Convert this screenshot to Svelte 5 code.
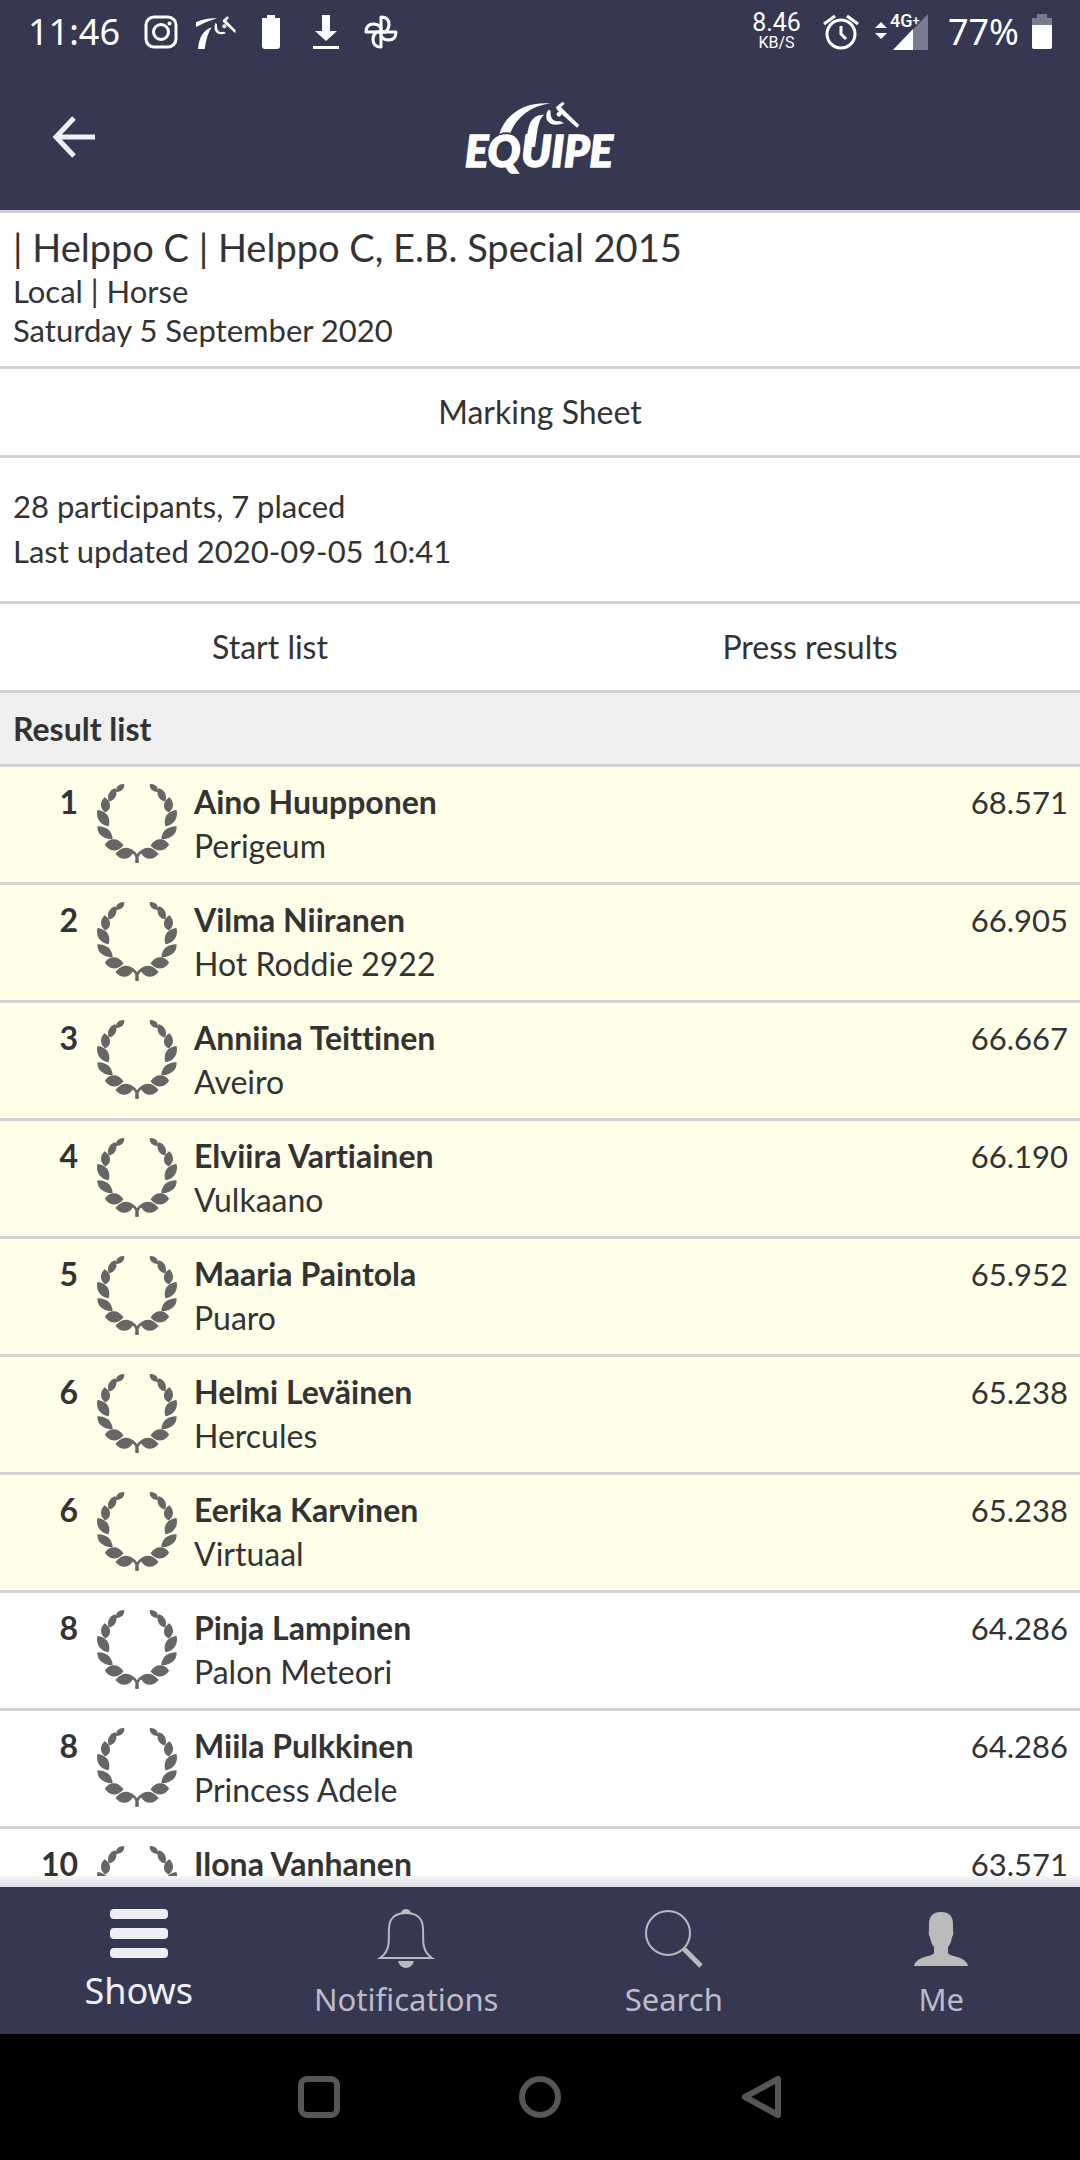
<script>
  const results = [
    { rank: 1, rider: 'Aino Huupponen', horse: 'Perigeum', score: '68.571', placed: true },
    { rank: 2, rider: 'Vilma Niiranen', horse: 'Hot Roddie 2922', score: '66.905', placed: true },
    { rank: 3, rider: 'Anniina Teittinen', horse: 'Aveiro', score: '66.667', placed: true },
    { rank: 4, rider: 'Elviira Vartiainen', horse: 'Vulkaano', score: '66.190', placed: true },
    { rank: 5, rider: 'Maaria Paintola', horse: 'Puaro', score: '65.952', placed: true },
    { rank: 6, rider: 'Helmi Leväinen', horse: 'Hercules', score: '65.238', placed: true },
    { rank: 6, rider: 'Eerika Karvinen', horse: 'Virtuaal', score: '65.238', placed: true },
    { rank: 8, rider: 'Pinja Lampinen', horse: 'Palon Meteori', score: '64.286', placed: false },
    { rank: 8, rider: 'Miila Pulkkinen', horse: 'Princess Adele', score: '64.286', placed: false },
    { rank: 10, rider: 'Ilona Vanhanen', horse: '', score: '63.571', placed: false },
  ];
</script>

{#snippet branch()}
  <path d="M108 66C106 54 115 46 129 46C130 57 122 66 108 66Z" />
  <path d="M103 59C89 64 80 77 86 94C101 91 110 75 103 59Z" />
  <path d="M72 86C60 98 59 115 74 127C89 119 92 99 72 86Z" />
  <path d="M52 124C48 144 57 163 82 169C89 147 78 128 52 124Z" />
  <path d="M52 173C52 192 67 207 94 208C91 184 77 174 52 173Z" />
  <path d="M75 226C87 209 110 205 126 228C110 247 88 246 75 226Z" />
  <path d="M107 254C124 233 148 230 168 257L172 278H166L166 262C160 250 157 250 154 252C142 271 121 270 107 254Z" />
{/snippet}

<div class="screen">
  <header>
    <div class="status">
      <div class="side left">
        <span class="clock">11:46</span>
        <svg width="34" height="34" viewBox="0 0 34 34" fill="none" stroke="#fff" stroke-width="3">
          <rect x="2" y="2" width="30" height="30" rx="8" />
          <circle cx="17" cy="17" r="7.5" />
          <circle cx="25.500" cy="8.500" r="2" fill="#fff" stroke="none" />
        </svg>
        <svg width="40" height="34" viewBox="0 0 120 102" fill="#fff">
          <path d="M0 22Q30 8 63 10Q32 19 0 36Z" />
          <path d="M6 102Q10 50 47 37Q32 58 26 102Z" />
          <path d="M58 24C50 48 62 64 90 55L84 50C68 55 62 46 63 28Z" />
          <path d="M80 16L94 4L99 8L91 17L119 46L118 55L82 22Z" />
          <circle cx="85" cy="34" r="6" />
        </svg>
        <svg class="batt" width="18" height="34" viewBox="0 0 18 34" fill="#fff">
          <path d="M5 0H13V3H18V31Q18 34 15 34H3Q0 34 0 31V3H5Z" />
        </svg>
        <svg width="26" height="34" viewBox="0 0 26 34" fill="#fff">
          <path d="M9 0H17V16H24L13 26L2 16H9ZM0 31H26V34H0Z" />
        </svg>
        <svg class="pinwheel" width="34" height="34" viewBox="0 0 34 34" fill="none" stroke="#fff" stroke-width="3" stroke-linejoin="round">
          <path d="M17 17V2Q25 2 25 9.500Q25 14 21.500 17Z" />
          <path d="M17 17H32Q32 25 24.500 25Q20 25 17 21.500Z" />
          <path d="M17 17V32Q9 32 9 24.500Q9 20 12.500 17Z" />
          <path d="M17 17H2Q2 9 9.500 9Q14 9 17 12.500Z" />
        </svg>
      </div>
      <div class="side right">
        <div class="speed"><b>8.46</b><small>KB/S</small></div>
        <svg width="36" height="36" viewBox="0 0 36 36" fill="none" stroke="#fff" stroke-width="3">
          <circle cx="18" cy="20" r="14" />
          <path d="M18 12V20L23 25M1 10L12 2M35 10L24 2" />
        </svg>
        <svg class="signal" width="54" height="36" viewBox="0 0 54 36">
          <path d="M0 14L6 8L12 14ZM0 19H12L6 25Z" fill="#fff" />
          <path d="M53 0V36H18Z" fill="#7a7b8e" />
          <path d="M38 15V36H18Z" fill="#fff" />
          <text x="15" y="13" class="net">4G<tspan dy="-2" class="plus">+</tspan></text>
        </svg>
        <span class="percent">77%</span>
        <svg width="20" height="36" viewBox="0 0 20 36">
          <path d="M5 0H15V4H20V12H0V4H5Z" fill="#7a7b8e" />
          <path d="M0 11H20V33Q20 35 18 35H2Q0 35 0 33Z" fill="#fff" />
        </svg>
      </div>
    </div>
    <div class="appbar">
      <button class="back" aria-label="Back">
        <svg width="44" height="42" viewBox="0 0 44 42" fill="none" stroke="#f0f0f4" stroke-width="5">
          <path d="M22 2L4 21L22 40M3 21H43" />
        </svg>
      </button>
      <svg class="logo" width="156" height="76" viewBox="66 56 468 228" fill="#fff" role="img" aria-label="Equipe">
        <path d="M178 160C198 102 250 64 331 69C272 78 232 108 211 157Q194 153 178 160Z" />
        <path d="M256 200C258 182 262 155 267 137C273 115 290 102 312 103C297 116 293 140 289 172L285 200Z" />
        <path d="M325 88C308 114 325 144 372 129L360 122C338 126 330 112 332 91Z" />
        <path d="M348 80L368 64L374 70L363 81L418 135L411 142L352 90Z" />
        <circle cx="357" cy="102" r="7" />
        <text class="word" x="75" y="259">EQ</text>
        <text class="word" x="244" y="259">UIPE</text>
      </svg>
    </div>
  </header>

  <main>
    <section class="title">
      <h1>| Helppo C | Helppo C, E.B. Special 2015</h1>
      <p>Local | Horse</p>
      <p>Saturday 5 September 2020</p>
    </section>
    <nav class="links"><a href="#marking">Marking Sheet</a></nav>
    <section class="summary">
      <p>28 participants, 7 placed</p>
      <p>Last updated 2020-09-05 10:41</p>
    </section>
    <nav class="links"><a href="#start">Start list</a><a href="#press">Press results</a></nav>
    <h2>Result list</h2>
    <ol>
      {#each results as r}
        <li class:placed={r.placed}>
          <span class="rank">{r.rank}</span>
          <svg class="wreath" width="80" height="79" viewBox="49 44 240 237" fill="#666" stroke="#666" stroke-width="4" stroke-linejoin="round" aria-hidden="true">
            {@render branch()}
            <g transform="matrix(-1 0 0 1 338 0)">{@render branch()}</g>
          </svg>
          <div class="who"><strong>{r.rider}</strong><span>{r.horse}</span></div>
          <span class="score">{r.score}</span>
        </li>
      {/each}
    </ol>
  </main>

  <nav class="tabs">
    <a href="#shows" class="active">
      <svg width="60" height="60" viewBox="0 0 60 60" fill="#ededf2">
        <rect x="1" y="0" width="58" height="10" rx="4" />
        <rect x="1" y="19" width="58" height="11" rx="4" />
        <rect x="1" y="39" width="58" height="10" rx="4" />
      </svg>
      <span>Shows</span>
    </a>
    <a href="#notifications">
      <svg width="60" height="60" viewBox="0 0 60 60" fill="none" stroke="#b9b9c0" stroke-width="2">
        <path d="M4 49C19 39 9 21 15 11Q19 4 30 4Q41 4 45 11C51 21 41 39 56 49Z" />
        <path d="M26 4Q27 1 30 1Q33 1 34 4Z" fill="#b9b9c0" />
        <path d="M22 52H38Q36 59 30 59Q24 59 22 52Z" fill="#b9b9c0" stroke="none" />
      </svg>
      <span>Notifications</span>
    </a>
    <a href="#search">
      <svg width="60" height="60" viewBox="0 0 60 60" fill="none" stroke="#b9b9c0">
        <circle cx="24" cy="24" r="22" stroke-width="2" />
        <path d="M40 40L57 57" stroke-width="5" />
      </svg>
      <span>Search</span>
    </a>
    <a href="#me">
      <svg width="60" height="60" viewBox="0 0 60 60" fill="#bbb">
        <path d="M30 3Q42 3 42 15V21Q43 26 41 28Q40 35 37 38V44Q38 46 43 47Q56 50 57 57H3Q4 50 17 47Q22 46 23 44V38Q20 35 19 28Q17 26 18 21V15Q18 3 30 3Z" />
      </svg>
      <span>Me</span>
    </a>
  </nav>

  <footer>
    <button aria-label="Recent apps">
      <svg width="42" height="42" viewBox="0 0 42 42"><rect x="3" y="3" width="36" height="36" rx="6" /></svg>
    </button>
    <button aria-label="Home">
      <svg width="42" height="42" viewBox="0 0 42 42"><circle cx="21" cy="21" r="18" /></svg>
    </button>
    <button aria-label="Go back">
      <svg width="42" height="42" viewBox="0 0 42 42"><path d="M5 21L38 3V39Z" /></svg>
    </button>
  </footer>
</div>

<style>
  :global(body) { margin: 0; }
  .screen {
    display: flex;
    flex-direction: column;
    height: 100vh;
    overflow: hidden;
    background: #fff;
    color: #333;
    font: 32px/44px Lato, sans-serif;
    font-variant-ligatures: none;
  }
  h1, h2, p, ol { margin: 0; padding: 0; font-weight: 400; }
  p, .score { font-size: 31px; }
  svg { display: block; flex: none; }
  a { color: inherit; text-decoration: none; }
  button { padding: 0; border: 0; background: none; }

  header { flex: none; background: #363852; color: #fff; border-bottom: 3px solid #cdced8; }
  .status {
    display: flex;
    justify-content: space-between;
    align-items: center;
    height: 64px;
    padding: 0 28px;
    font: 36px/64px "Noto Sans", sans-serif;
  }
  .side { display: flex; align-items: center; }
  .left { gap: 18px; }
  .clock { margin-right: 6px; }
  .batt { margin: 0 15px 0 8px; }
  .pinwheel { margin-left: 7px; }
  .right { gap: 16px; }
  .speed { display: flex; flex-direction: column; align-items: center; margin-right: 6px; font-family: Roboto, sans-serif; }
  .speed b { font-size: 25px; line-height: 22px; font-weight: 400; }
  .speed small { font-size: 16px; line-height: 18px; }
  .signal { overflow: visible; }
  .net { fill: #fff; font: 500 18px Roboto, sans-serif; }
  .plus { font-size: 13px; }
  .percent { margin: 0 -3px 0 3px; }

  .appbar {
    display: grid;
    grid-template-columns: 1fr auto 1fr;
    align-items: center;
    height: 146px;
    padding: 0 52px;
  }
  .back { justify-self: start; }
  .word { font: italic 900 130px Lato, sans-serif; stroke: #fff; stroke-width: 5; }

  main { flex: 1; min-height: 0; overflow: hidden; }
  .title { padding: 10px 13px 16px; border-bottom: 3px solid #d2d2d2; line-height: 39px; }
  h1 { font-size: 38px; line-height: 49px; }
  .links { display: flex; border-bottom: 3px solid #d2d2d2; }
  .links a { flex: 1; text-align: center; line-height: 86px; }
  .summary { padding: 26px 13px 27px; border-bottom: 3px solid #d2d2d2; line-height: 45px; }
  h2 {
    padding: 0 13px;
    border-bottom: 3px solid #d2d2d2;
    background: #efefef;
    font-size: 32px;
    line-height: 71px;
    font-weight: 700;
  }
  ol { list-style: none; }
  li { display: flex; height: 102px; padding: 13px 12px 0 0; border-bottom: 3px solid #d2d2d2; }
  .placed { background: #ffffe9; }
  .rank { width: 78px; text-align: right; font-weight: 700; }
  .wreath { margin: 4px 17px 0 19px; }
  .who { flex: 1; display: flex; flex-direction: column; }
  .who strong { font-weight: 700; }

  .tabs {
    flex: none;
    display: grid;
    grid-template: auto 1fr / repeat(4, 1fr);
    height: 147px;
    padding: 0 5px;
    background: #363852;
    color: #bcbcc8;
    font: 31px/44px "Noto Sans", sans-serif;
  }
  .tabs::before {
    content: "";
    grid-column: 1 / -1;
    height: 11px;
    margin: -11px -5px 0;
    background: linear-gradient(#f6f6f6, #dcdde4);
  }
  .tabs a { display: flex; flex-direction: column; align-items: center; padding-top: 22px; }
  .tabs span { margin-top: 8px; }
  .tabs .active { color: #f0f0f8; }
  .tabs .active span { margin-top: 0; font-size: 36px; }

  footer {
    flex: none;
    display: grid;
    grid-template-columns: repeat(3, 221px);
    justify-content: center;
    align-items: center;
    height: 126px;
    background: #000;
  }
  footer button { justify-self: center; }
  footer svg { fill: none; stroke: #565656; stroke-width: 6; stroke-linejoin: round; }
</style>
